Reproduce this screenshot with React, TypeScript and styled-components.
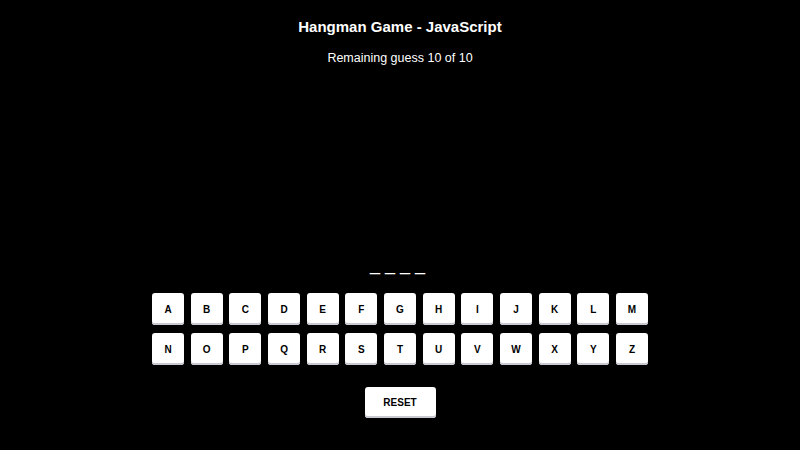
import styled, { createGlobalStyle } from "styled-components";

const LETTERS = "ABCDEFGHIJKLMNOPQRSTUVWXYZ".split("");
const ROWS = [LETTERS.slice(0, 13), LETTERS.slice(13)];

const GlobalStyle = createGlobalStyle`
  html, body {
    margin: 0;
    background: #000;
    color: #fff;
    font-family: "Liberation Sans", Arial, sans-serif;
  }
`;

const App = () => {
  const word = "____";
  const remaining = 10;

  return (
    <>
      <GlobalStyle />
      <Page>
        <Title>Hangman Game - JavaScript</Title>
        <Remaining>
          Remaining guess {remaining} of {remaining}
        </Remaining>
        <Gallows />
        <Word>{word.split("").join(" ")}&nbsp;</Word>
        <Keyboard>
          {ROWS.map((row, i) => (
            <KeyRow key={i}>
              {row.map((letter) => (
                <Key key={letter}>{letter}</Key>
              ))}
            </KeyRow>
          ))}
        </Keyboard>
        <ResetButton>RESET</ResetButton>
      </Page>
    </>
  );
};

const Page = styled.div`
  display: flex;
  flex-direction: column;
  align-items: center;
  padding-top: 17px;
`;

const Title = styled.h1`
  margin: 0;
  font-size: 15px;
  line-height: 20px;
  font-weight: bold;
`;

const Remaining = styled.p`
  margin: 11px 0 0;
  font-size: 12.5px;
  line-height: 20px;
`;

const Gallows = styled.div`
  width: 300px;
  height: 186px;
`;

const Word = styled.div`
  font-size: 18px;
  line-height: 21px;
  white-space: pre;
`;

const Keyboard = styled.div`
  display: flex;
  flex-direction: column;
  gap: 8px;
  margin-top: 18px;
`;

const KeyRow = styled.div`
  display: flex;
  gap: 6.67px;
`;

const Key = styled.button`
  width: 32px;
  height: 32px;
  padding: 0;
  border: none;
  border-radius: 3px;
  background: #fff;
  color: #000;
  font-family: "Liberation Sans", Arial, sans-serif;
  font-size: 10px;
  font-weight: bold;
  box-shadow: inset 0 -2px 0 #c9c9d2;
  cursor: pointer;
`;

const ResetButton = styled(Key)`
  width: 71px;
  height: 31px;
  margin-top: 22px;
`;

export default App;
